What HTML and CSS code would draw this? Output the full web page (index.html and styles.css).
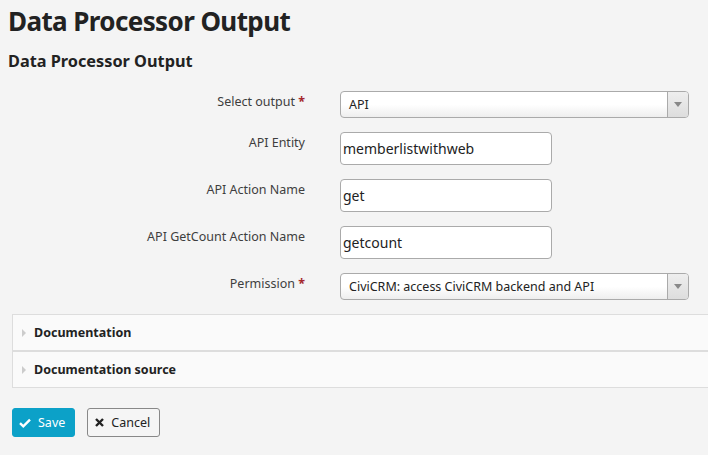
FILE: index.html
```html
<!DOCTYPE html>
<html lang="en">
<head>
    <meta charset="UTF-8">
    <title>Data Processor Output</title>
    <link rel="stylesheet" href="styles.css">
</head>
<body>
    <h1 class="page-title">Data Processor Output</h1>
    <h3 class="section-title">Data Processor Output</h3>

    <div class="form-grid">
        <label class="form-label">Select output <span class="required">*</span></label>
        <div class="form-control">
            <div class="select wide">
                <span class="select-value">API</span>
                <span class="select-arrow"><span class="caret"></span></span>
            </div>
        </div>

        <label class="form-label">API Entity</label>
        <div class="form-control"><div class="text-input">memberlistwithweb</div></div>

        <label class="form-label">API Action Name</label>
        <div class="form-control"><div class="text-input">get</div></div>

        <label class="form-label">API GetCount Action Name</label>
        <div class="form-control"><div class="text-input">getcount</div></div>

        <label class="form-label">Permission <span class="required">*</span></label>
        <div class="form-control">
            <div class="select wide">
                <span class="select-value">CiviCRM: access CiviCRM backend and API</span>
                <span class="select-arrow"><span class="caret"></span></span>
            </div>
        </div>
    </div>

    <div class="accordions">
        <div class="accordion"><span class="acc-caret"></span>Documentation</div>
        <div class="accordion"><span class="acc-caret"></span>Documentation source</div>
    </div>

    <div class="buttons">
        <button class="btn btn-primary">
            <svg width="12" height="10" viewBox="0 0 12 10"><path d="M1 5.2 L4.3 8.3 L11 1.6" fill="none" stroke="#fff" stroke-width="2.4"/></svg>
            Save
        </button>
        <button class="btn btn-default">
            <svg width="9" height="9" viewBox="0 0 9 9"><path d="M1 1 L8 8 M8 1 L1 8" fill="none" stroke="#222" stroke-width="2.4"/></svg>
            Cancel
        </button>
    </div>
</body>
</html>
```

FILE: styles.css
```css
* {
    box-sizing: border-box;
}

html, body {
    overflow: hidden;
}

body {
    margin: 0;
    padding: 0 0 0 8px;
    background: #f4f4f4;
    font-family: 'Noto Sans', 'Open Sans', sans-serif;
    color: #3e3e3e;
    font-size: 12.5px;
}

.page-title {
    margin: 0;
    padding-top: 2px;
    font-size: 26px;
    letter-spacing: -0.6px;
    line-height: 38px;
    font-weight: 700;
    color: #222;
}

.section-title {
    margin: 10px 0 0;
    font-size: 16.3px;
    line-height: 22px;
    font-weight: 700;
    color: #222;
}

.form-grid {
    display: grid;
    grid-template-columns: 297px 1fr;
    column-gap: 35px;
    row-gap: 14px;
    margin-top: 19px;
}

.form-label {
    text-align: right;
    padding-top: 2px;
    line-height: 18px;
}

.required {
    color: #a4262c;
    font-weight: 700;
}

.select {
    display: flex;
    height: 27px;
    border: 1px solid #aaa;
    border-radius: 4px;
    background: linear-gradient(#fff 50%, #eee);
    overflow: hidden;
}

.select.wide {
    width: 349px;
}

.select-value {
    flex: 1;
    padding: 0 8px;
    line-height: 25px;
    color: #222;
}

.select-arrow {
    width: 21px;
    border-left: 1px solid #aaa;
    background: linear-gradient(#eee, #ddd);
    display: flex;
    align-items: center;
    justify-content: center;
}

.caret {
    width: 0;
    height: 0;
    border-left: 4px solid transparent;
    border-right: 4px solid transparent;
    border-top: 5px solid #888;
}

.text-input {
    width: 212px;
    height: 33px;
    border: 1px solid #aaa;
    border-radius: 4px;
    background: #fff;
    padding: 0 2px;
    font-size: 14px;
    line-height: 31px;
    color: #222;
}

.accordions {
    margin: 14px -20px 0 4px;
}

.accordion {
    display: flex;
    align-items: center;
    height: 37px;
    background: #fafafa;
    border: 1px solid #ddd;
    padding-left: 9px;
    font-weight: 700;
    color: #222;
}

.acc-caret {
    width: 0;
    height: 0;
    border-top: 4px solid transparent;
    border-bottom: 4px solid transparent;
    border-left: 4px solid #ccc;
    margin-right: 8px;
}

.buttons {
    display: flex;
    gap: 12px;
    margin: 20px 0 0 4px;
}

.btn {
    display: flex;
    align-items: center;
    gap: 7px;
    height: 29px;
    border-radius: 3px;
    font-family: inherit;
    font-size: 12.5px;
    cursor: pointer;
}

.btn-primary {
    background: #0ca1c8;
    border: 1px solid #0ca1c8;
    color: #fff;
    padding: 0 9px 0 6px;
}

.btn-default {
    background: #f5f5f5;
    border: 1px solid #888;
    color: #222;
    padding: 0 9px 0 7px;
}
```
